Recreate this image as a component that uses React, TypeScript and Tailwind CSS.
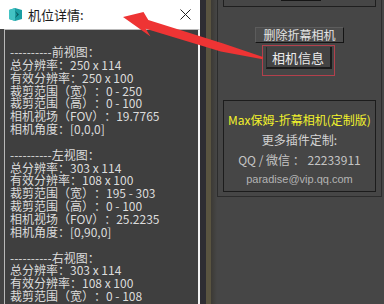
import React from 'react';

const cjk = "font-['Noto_Sans_CJK_SC','Noto_Sans',sans-serif]";

const lines = [
    '----------前视图：',
    '总分辨率：250 x 114',
    '有效分辨率：250 x 100',
    '裁剪范围（宽）：0 - 250',
    '裁剪范围（高）：0 - 100',
    '相机视场（FOV）：19.7765',
    '相机角度：[0,0,0]',
    '',
    '----------左视图：',
    '总分辨率：303 x 114',
    '有效分辨率：108 x 100',
    '裁剪范围（宽）：195 - 303',
    '裁剪范围（高）：0 - 100',
    '相机视场（FOV）：25.2235',
    '相机角度：[0,90,0]',
    '',
    '----------右视图：',
    '总分辨率：303 x 114',
    '有效分辨率：108 x 100',
    '裁剪范围（宽）：0 - 108',
];

const MaxIcon = () => (
    <svg width="15" height="15" viewBox="0 0 15 15">
        <path d="M1 3 L7 1 L14 3 L14 12 L7 14 L1 12 Z" fill="#1b9ea3" />
        <path d="M1 3 L7 1 L7 14 L1 12 Z" fill="#43c3c4" />
        <path d="M7 4 L11 7.5 L7 11 L9 7.5 Z" fill="#0c5d63" />
    </svg>
);

export default function App() {
    return (
        <div className={`relative w-[384px] h-[304px] overflow-hidden flex bg-[#464646] [text-spacing-trim:space-all] ${cjk}`}>
            {/* dialog */}
            <div className="w-[200px] flex flex-col bg-[#434343]">
                <div className="h-[29px] shrink-0 bg-white flex items-center pl-[8px] pr-[9px]">
                    <MaxIcon />
                    <span className="ml-[5px] text-[13px] text-[#1a1a1a] leading-none">机位详情:</span>
                    <svg className="ml-auto" width="11" height="11" viewBox="0 0 11 11">
                        <path d="M0.5 0.5 L10.5 10.5 M10.5 0.5 L0.5 10.5" stroke="#222" strokeWidth="1" />
                    </svg>
                </div>
                <div className="flex-1 pl-[4px]">
                    <div className="h-full border-l border-t border-[#b9b9b9] border-r-2 border-r-[#f2f2f2] bg-[#3f3f3f] pt-[16px] pl-[5px] text-[12px] leading-[12.85px] text-[#dcdcdc] whitespace-pre">
                        {lines.map((l, i) => (
                            <div key={i} className="h-[12.85px]">{l}</div>
                        ))}
                    </div>
                </div>
            </div>

            {/* frame strips */}
            <div className="w-[6px] bg-[#2e2d32]" />
            <div className="w-[5px] bg-[#5a5440]" />
            <div className="w-[6px] bg-gradient-to-r from-[#3c3a35] to-[#464646]" />

            {/* rollout panel */}
            <div className="flex-1 flex flex-col">
                <div className="w-[165px] h-[197px] border-l border-r border-b border-[#2c2c2c] flex flex-col px-[5px]">
                    <div className="h-[7px] border-l border-r border-b border-[#1f1f1f] flex justify-center">
                        <div className="w-[40px] h-[1px] bg-[#151515] ml-[3px]" />
                    </div>

                    <div className="mt-[20px] flex justify-center">
                        <button className="w-[89px] h-[16px] bg-[#4c4c4c] border-t border-l border-[#5c5c5c] border-r border-b border-r-[#141414] border-b-[#141414] text-[12px] leading-none text-[#e4e4e4] flex items-center justify-center">
                            删除折幕相机
                        </button>
                    </div>

                    <div className="mt-[2px] flex justify-center">
                        <div className="w-[73px] h-[31px] border-[1.5px] border-[#b3404c] flex items-start justify-center pt-[1px] ml-[-2px]">
                            <button className="w-[66px] h-[22px] bg-[#434343] border-l border-[#2a2a2a] border-r-2 border-b-2 border-r-[#1a1a1a] border-b-[#1a1a1a] text-[13px] leading-none text-[#ebebeb] flex items-center justify-center">
                                相机信息
                            </button>
                        </div>
                    </div>

                    <div className="mt-[24px] h-[92px] border border-[#1c1c1c] flex flex-col items-center pt-[9px] whitespace-nowrap">
                        <div className="text-[12px] leading-[20px] text-[#f2f22c]">Max保姆-折幕相机(定制版)</div>
                        <div className="text-[12px] leading-[20px] text-[#d4d4d4]">更多插件定制:</div>
                        <div className="text-[12px] leading-[19px] text-[#c4c4c4]">QQ / 微信 ： 22233911</div>
                        <div className="text-[11px] leading-[20px] text-[#b4b4b4] font-['Liberation_Sans',sans-serif]">paradise@vip.qq.com</div>
                    </div>
                </div>
            </div>

            {/* red annotation arrow */}
            <svg className="absolute inset-0 pointer-events-none" width="384" height="304" viewBox="0 0 384 304">
                <path
                    d="M123 17 L143.5 12 L148.3 20 L223.2 43.6 L263 57 L262.6 59.2 L220.8 51.4 L145.7 28.8 L150.5 36.5 Z"
                    fill="#ee3434"
                />
            </svg>
        </div>
    );
}
